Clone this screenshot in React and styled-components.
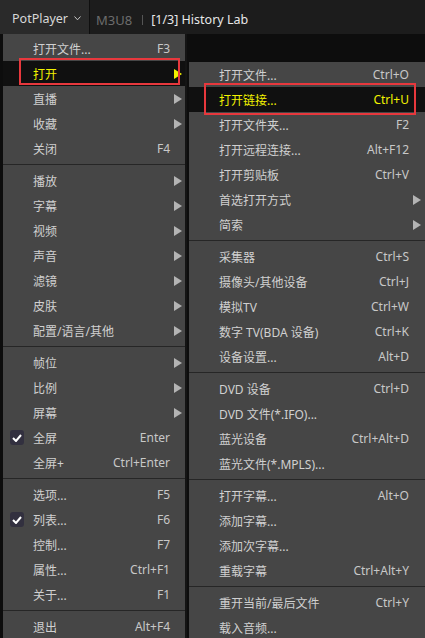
import React from 'react';
import styled, { createGlobalStyle } from 'styled-components';

const Global = createGlobalStyle`
  html, body { margin: 0; padding: 0; background: #0d0d0d; }
  body { font-family: "Noto Sans", "Noto Sans CJK SC", sans-serif; }
  * { box-sizing: border-box; }
`;

const Screen = styled.div`
  width: 425px;
  height: 638px;
  overflow: hidden;
  background: #0d0d0d;
  display: flex;
  flex-direction: column;
`;

const TopBar = styled.div`
  height: 34px;
  flex: none;
  display: flex;
  align-items: stretch;
  background: #1c1c1c;
  font-family: "Noto Sans", "Noto Sans CJK SC", sans-serif;
`;

const AppTab = styled.div`
  width: 90px;
  display: flex;
  align-items: center;
  gap: 6px;
  padding: 3px 0 0 12px;
  background: #2a2a2a;
  border-right: 1px solid #0f0f0f;
  color: #d8d8d8;
  font-size: 12.5px;
`;

const Format = styled.span`
  display: flex;
  align-items: center;
  padding-top: 5px;
  margin-left: 6px;
  color: #6c6c6c;
  font-size: 13px;
`;

const Divider = styled.span`
  width: 1px;
  height: 10px;
  background: #555;
  align-self: center;
  margin: 5px 8px 0 10px;
`;

const Title = styled.span`
  display: flex;
  align-items: center;
  padding-top: 5px;
  color: #e8e8e8;
  font-size: 12.5px;
`;

const Stage = styled.div`
  flex: 1;
  display: flex;
  align-items: flex-start;
  padding-left: 3px;
`;

const Menu = styled.div`
  flex: none;
  width: ${p => p.$width}px;
  margin-top: ${p => p.$top}px;
  margin-left: ${p => p.$left}px;
  padding-top: ${p => p.$padTop}px;
  background: #464646;
  border-right: ${p => p.$edge ? '2px solid #141414' : 'none'};
  font-family: "Noto Sans", "Noto Sans CJK SC", sans-serif;
  font-size: 12px;
`;

const Row = styled.div`
  position: relative;
  height: 25px;
  display: grid;
  grid-template-columns: 30px 1fr auto ${p => p.$arrowCol}px;
  align-items: center;
  background: ${p => p.$active ? '#101010' : 'transparent'};
  color: ${p => p.$active ? '#f2f200' : '#d0d0d0'};
`;

const CheckCell = styled.div`
  display: flex;
  justify-content: flex-start;
  padding-left: 7px;
`;

const CheckBox = styled.div`
  width: 14px;
  height: 15px;
  border-radius: 3px;
  background: #32303f;
  display: flex;
  align-items: center;
  justify-content: center;
`;

const Label = styled.span`
  white-space: nowrap;
`;

const Key = styled.span`
  white-space: nowrap;
  color: ${p => p.$active ? '#f2f200' : '#c8c8c8'};
`;

const ArrowCell = styled.div`
  display: flex;
  align-items: center;
  padding-left: 4px;
`;

const Sep = styled.div`
  height: 7px;
  padding: 3px 0;
  &::after {
    content: '';
    display: block;
    height: 1px;
    background: #262626;
  }
`;

const Mark = styled.div`
  position: absolute;
  left: ${p => p.$x}px;
  top: ${p => p.$y}px;
  width: ${p => p.$w}px;
  height: ${p => p.$h}px;
  border: 2px solid #e8383d;
  pointer-events: none;
`;

const Tri = ({ color }) => (
  <svg width="8" height="10" viewBox="0 0 8 10">
    <polygon points="0,0 8,5 0,10" fill={color} />
  </svg>
);

const Check = () => (
  <svg width="10" height="8" viewBox="0 0 10 8">
    <polyline points="1,4 4,7 9,1" fill="none" stroke="#ffffff" strokeWidth="2" />
  </svg>
);

const mainItems = [
  { label: '打开文件...', key: 'F3' },
  { label: '打开', sub: true, active: true, mark: { x: 16, y: -3, w: 161, h: 27 } },
  { label: '直播', sub: true },
  { label: '收藏', sub: true },
  { label: '关闭', key: 'F4' },
  'sep',
  { label: '播放', sub: true },
  { label: '字幕', sub: true },
  { label: '视频', sub: true },
  { label: '声音', sub: true },
  { label: '滤镜', sub: true },
  { label: '皮肤', sub: true },
  { label: '配置/语言/其他', sub: true },
  'sep',
  { label: '帧位', sub: true },
  { label: '比例', sub: true },
  { label: '屏幕', sub: true },
  { label: '全屏', key: 'Enter', check: true },
  { label: '全屏+', key: 'Ctrl+Enter' },
  'sep',
  { label: '选项...', key: 'F5' },
  { label: '列表...', key: 'F6', check: true },
  { label: '控制...', key: 'F7' },
  { label: '属性...', key: 'Ctrl+F1' },
  { label: '关于...', key: 'F1' },
  'sep',
  { label: '退出', key: 'Alt+F4' },
];

const subItems = [
  { label: '打开文件...', key: 'Ctrl+O' },
  { label: '打开链接...', key: 'Ctrl+U', active: true, mark: { x: 15, y: -4, w: 212, h: 32 } },
  { label: '打开文件夹...', key: 'F2' },
  { label: '打开远程连接...', key: 'Alt+F12' },
  { label: '打开剪贴板', key: 'Ctrl+V' },
  { label: '首选打开方式', sub: true },
  { label: '简索', sub: true },
  'sep',
  { label: '采集器', key: 'Ctrl+S' },
  { label: '摄像头/其他设备', key: 'Ctrl+J' },
  { label: '模拟TV', key: 'Ctrl+W' },
  { label: '数字 TV(BDA 设备)', key: 'Ctrl+K' },
  { label: '设备设置...', key: 'Alt+D' },
  'sep',
  { label: 'DVD 设备', key: 'Ctrl+D' },
  { label: 'DVD 文件(*.IFO)...' },
  { label: '蓝光设备', key: 'Ctrl+Alt+D' },
  { label: '蓝光文件(*.MPLS)...' },
  'sep',
  { label: '打开字幕...', key: 'Alt+O' },
  { label: '添加字幕...' },
  { label: '添加次字幕...' },
  { label: '重载字幕', key: 'Ctrl+Alt+Y' },
  'sep',
  { label: '重开当前/最后文件', key: 'Ctrl+Y' },
  { label: '载入音频...' },
];

const MenuList = ({ items, arrowCol }) =>
  items.map((it, i) =>
    it === 'sep' ? (
      <Sep key={i} />
    ) : (
      <Row key={i} $active={it.active} $arrowCol={arrowCol}>
        <CheckCell>
          {it.check && (
            <CheckBox>
              <Check />
            </CheckBox>
          )}
        </CheckCell>
        <Label>{it.label}</Label>
        <Key $active={it.active}>{it.key || ''}</Key>
        <ArrowCell>{it.sub && <Tri color={it.active ? '#f2f200' : '#b4b4b4'} />}</ArrowCell>
        {it.mark && <Mark $x={it.mark.x} $y={it.mark.y} $w={it.mark.w} $h={it.mark.h} />}
      </Row>
    )
  );

export default function App() {
  return (
    <>
      <Global />
      <Screen>
        <TopBar>
          <AppTab>
            PotPlayer
            <svg width="7" height="5" viewBox="0 0 7 5">
              <polyline points="0.5,0.5 3.5,3.8 6.5,0.5" fill="none" stroke="#c8c8c8" strokeWidth="1" />
            </svg>
          </AppTab>
          <Format>M3U8</Format>
          <Divider />
          <Title>[1/3] History Lab</Title>
        </TopBar>
        <Stage>
          <Menu $width={184} $top={0} $left={0} $padTop={2} $edge>
            <MenuList items={mainItems} arrowCol={15} />
          </Menu>
          <Menu $width={236} $top={28} $left={2} $padTop={0}>
            <MenuList items={subItems} arrowCol={16} />
          </Menu>
        </Stage>
      </Screen>
    </>
  );
}
